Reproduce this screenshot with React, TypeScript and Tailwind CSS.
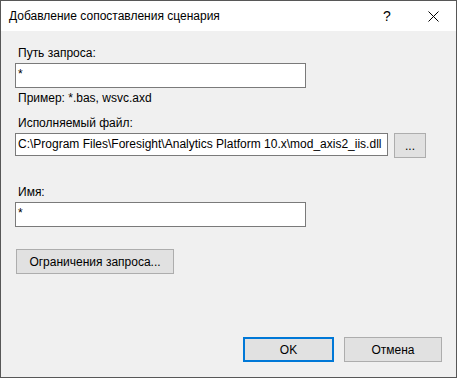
import React from "react";

const font = { fontFamily: '"Segoe UI", "Liberation Sans", Arial, sans-serif' };

const TextBox = ({ value, className }: { value: string; className: string }) => (
  <div
    className={`h-[25px] bg-white border border-[#7a7a7a] pl-[2px] text-[12px] leading-[21px] text-black whitespace-nowrap overflow-hidden ${className}`}
  >
    {value}
  </div>
);

const App: React.FC = () => {
  return (
    <div
      className="w-[457px] h-[378px] border border-[#575757] bg-[#f0f0f0] flex flex-col text-black"
      style={font}
    >
      {/* title bar */}
      <div className="h-[30px] bg-white flex items-center shrink-0">
        <span className="ml-[8px] text-[12px] flex-1">Добавление сопоставления сценария</span>
        <span className="w-[46px] text-center text-[14px]">?</span>
        <span className="w-[46px] flex items-center justify-center mr-[0px]">
          <svg width="11" height="11" viewBox="0 0 11 11">
            <path d="M0.5 0.5 L10.5 10.5 M10.5 0.5 L0.5 10.5" stroke="#000" strokeWidth="1" />
          </svg>
        </span>
      </div>

      {/* body */}
      <div className="flex flex-col flex-1 pl-[14px] text-[12px]">
        <div className="mt-[15px] h-[15px] leading-[15px] ml-[3px]">Путь запроса:</div>
        <TextBox value="*" className="mt-[2px] w-[291px]" />
        <div className="mt-[3px] h-[15px] leading-[15px] ml-[3px]">Пример: *.bas, wsvc.axd</div>
        <div className="mt-[10px] h-[15px] leading-[15px] ml-[3px]">Исполняемый файл:</div>
        <div className="mt-[2px] flex items-start gap-[6px]">
          <TextBox
            value="C:\Program Files\Foresight\Analytics Platform 10.x\mod_axis2_iis.dll"
            className="w-[373px] !h-[23px] !leading-[21px]"
          />
          <button className="w-[32px] h-[25px] bg-[#e1e1e1] border border-[#adadad] text-[12px] leading-[14px] flex items-end justify-center pb-[4px]">
            ...
          </button>
        </div>
        <div className="mt-[27px] h-[15px] leading-[15px] ml-[3px]">Имя:</div>
        <TextBox value="*" className="mt-[2px] w-[291px]" />
        <button className="mt-[22px] ml-[1px] w-[158px] h-[25px] bg-[#e1e1e1] border border-[#adadad] text-[12px]">
          Ограничения запроса...
        </button>

        <div className="mt-auto mb-[15px] flex justify-end gap-[10px] pr-[14px]">
          <button className="w-[91px] h-[25px] bg-[#e1e1e1] border-2 border-[#0078d7] text-[12px]">OK</button>
          <button className="w-[98px] h-[25px] bg-[#e1e1e1] border border-[#adadad] text-[12px]">Отмена</button>
        </div>
      </div>
    </div>
  );
};

export default App;
